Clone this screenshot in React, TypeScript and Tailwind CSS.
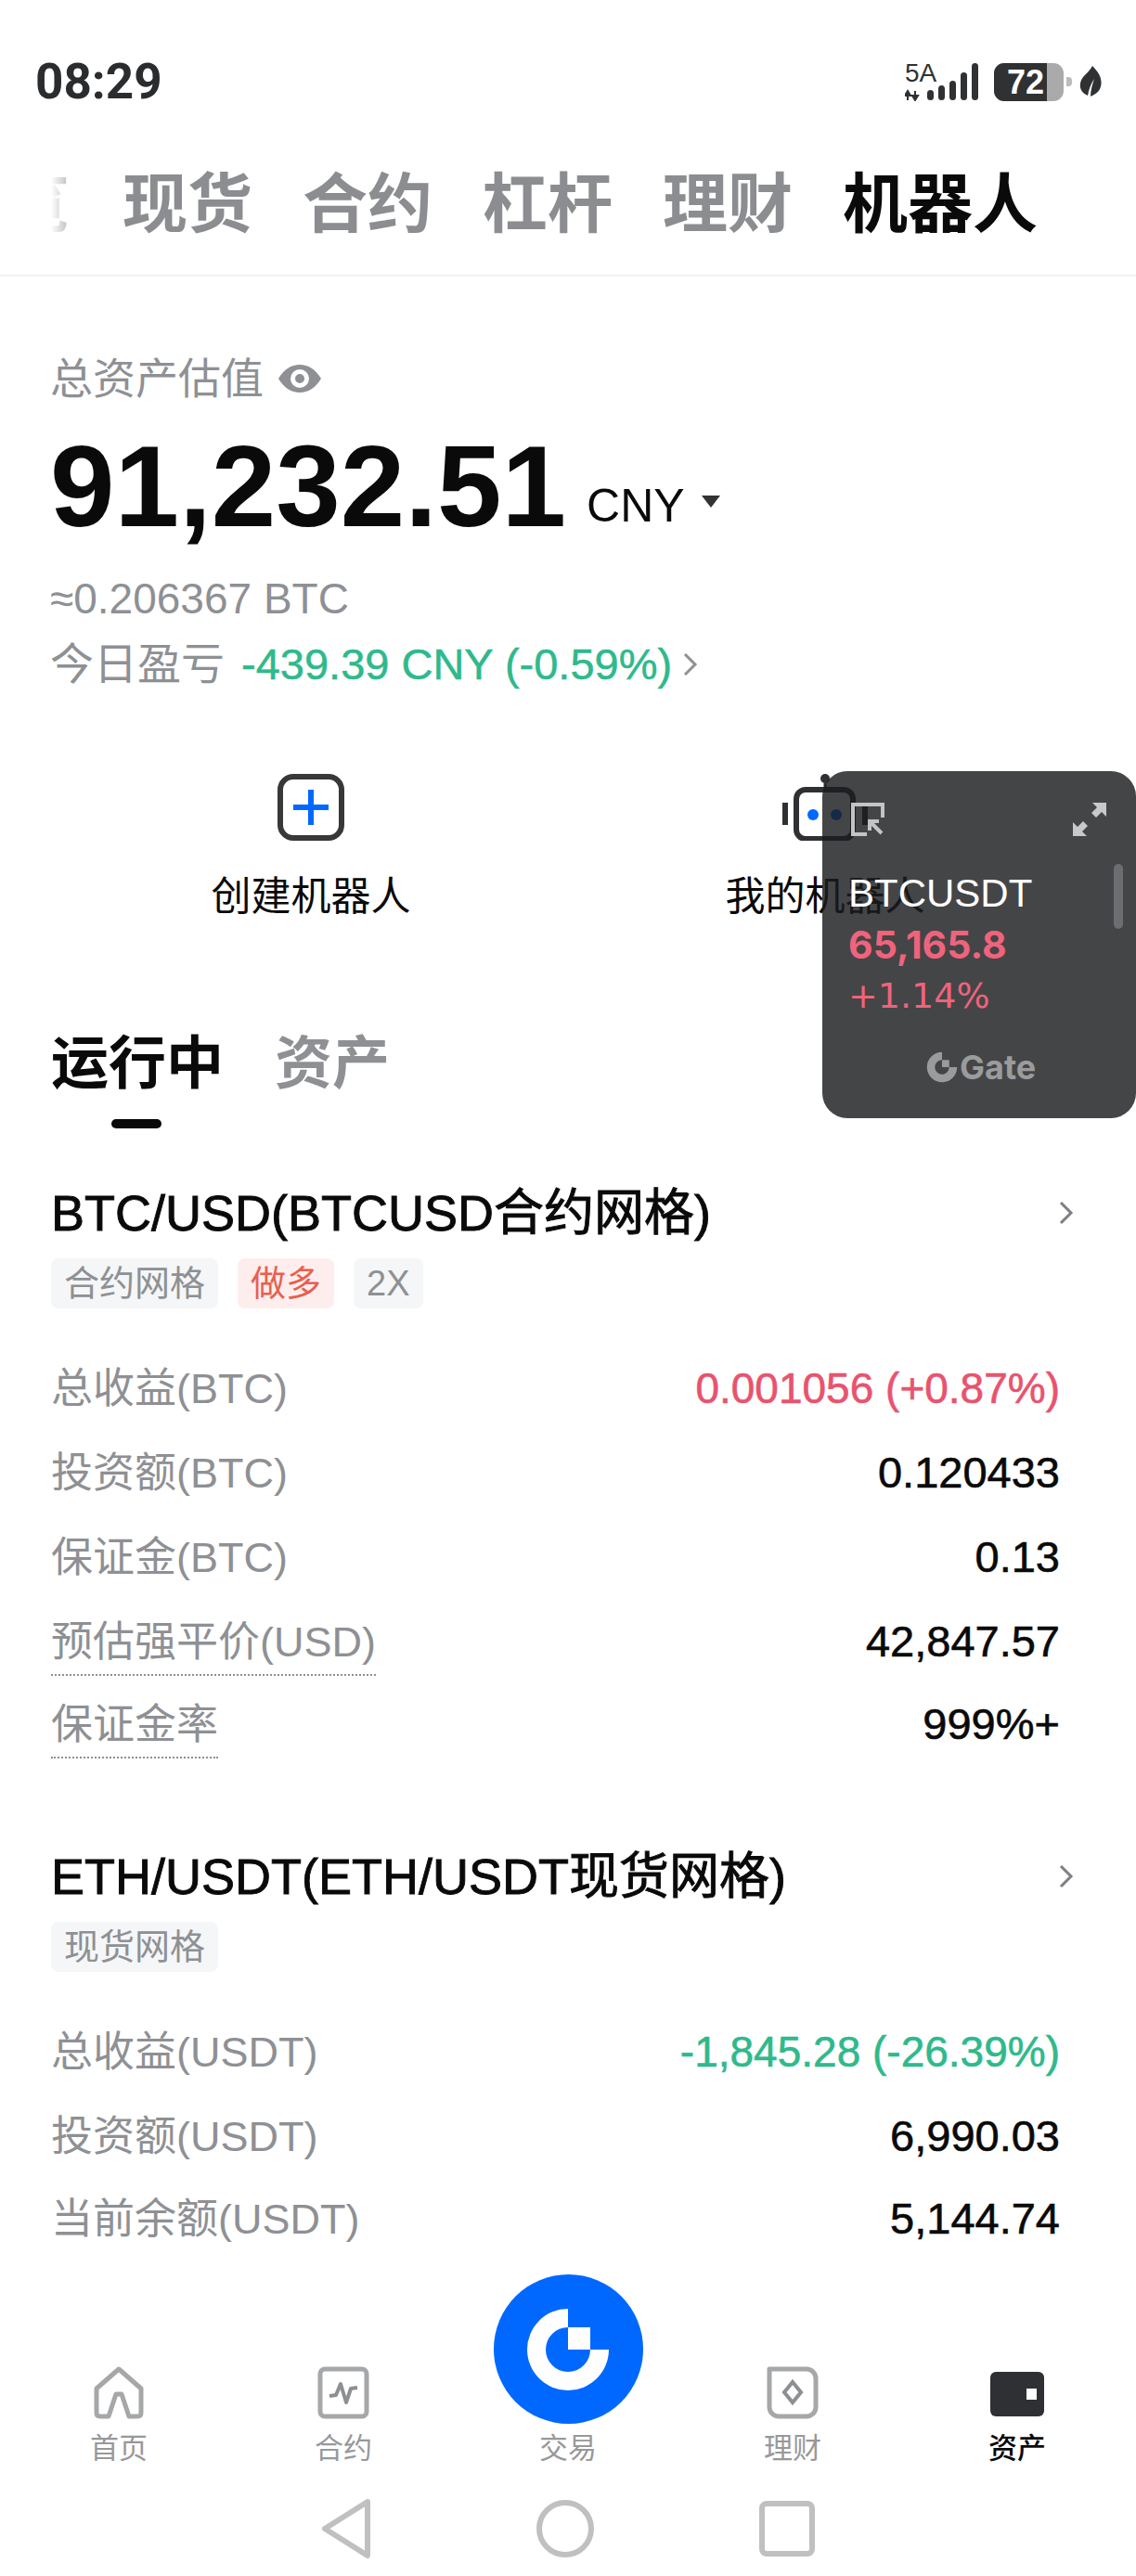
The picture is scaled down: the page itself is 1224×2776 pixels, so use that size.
import type { ReactNode } from 'react'

const medium = '[-webkit-text-stroke-width:0.9px]'

const btcRows = [
  { label: '总收益(BTC)', value: '0.001056 (+0.87%)', color: 'text-[46px] text-[#e8536e]' },
  { label: '投资额(BTC)', value: '0.120433' },
  { label: '保证金(BTC)', value: '0.13' },
  { label: '预估强平价(USD)', value: '42,847.57', dotted: true },
  { label: '保证金率', value: '999%+', dotted: true },
]

const ethRows = [
  { label: '总收益(USDT)', value: '-1,845.28 (-26.39%)', color: 'text-[46px] text-[#2fb98c]' },
  { label: '投资额(USDT)', value: '6,990.03' },
  { label: '当前余额(USDT)', value: '5,144.74' },
]

type Row = { label: string; value: string; color?: string; dotted?: boolean }

function Chevron({ className }: { className: string }) {
  return (
    <svg viewBox="0 0 16 26" className={className} fill="none" stroke="currentColor" strokeWidth="3">
      <path d="M2 2l11 11L2 24" />
    </svg>
  )
}

function Tag({ children, red }: { children: ReactNode; red?: boolean }) {
  return (
    <span
      className={`flex h-[54px] items-center rounded-lg px-[14px] text-[38px] ${
        red ? 'bg-[#fdeeed] text-[#e8604f]' : 'bg-[#f5f6f7] text-[#8e9094]'
      }`}
    >
      {children}
    </span>
  )
}

function BotCard({ title, tags, rows }: { title: string; tags: ReactNode; rows: Row[] }) {
  return (
    <section className="pl-[55px] pr-[82px]">
      <div className="flex h-[70px] items-center justify-between">
        <h2 className={`text-[54px] leading-[70px] font-normal text-[#0a0a0a] ${medium}`}>{title}</h2>
        <Chevron className="mr-[-15px] h-[26px] w-[16px] text-[#7d7f83]" />
      </div>
      <div className="mt-[14px] flex gap-[21px]">{tags}</div>
      <div className="mt-[41px]">
        {rows.map((row) => (
          <div key={row.label} className="flex h-[91px] items-center justify-between last:h-[87px]">
            <span
              className={`text-[45px] leading-[54px] text-[#8e9094] ${
                row.dotted ? 'mt-[9px] border-b-2 border-dotted border-[#8e9094] pb-[7px]' : ''
              }`}
            >
              {row.label}
            </span>
            <span className={`[-webkit-text-stroke-width:0.6px] ${row.color ?? 'text-[47px] text-[#0a0a0a]'}`}>
              {row.value}
            </span>
          </div>
        ))}
      </div>
    </section>
  )
}

function StatusIcons() {
  return (
    <div className="flex items-center">
      <svg viewBox="0 0 84 42" className="h-[42px] w-[84px]" fill="#303133">
        <text x="0" y="21" fontSize="28" fontFamily="Liberation Sans">5A</text>
        <path d="M3 31v10M3 31l-3 5h6zM11 41V31M11 41l-3-5h6z" stroke="#303133" strokeWidth="2" />
        <rect x="24" y="30" width="7" height="11" rx="3.5" />
        <rect x="36" y="25" width="7" height="16" rx="3.5" />
        <rect x="48" y="20" width="7" height="21" rx="3.5" />
        <rect x="60" y="11" width="7" height="30" rx="3.5" />
        <rect x="72" y="1" width="7" height="40" rx="3.5" />
      </svg>
      <div className="relative ml-[12px] flex h-[41px] w-[75px] overflow-hidden rounded-[11px] bg-[#aaaaaa]">
        <div className="h-full w-[57px] bg-[#303133]" />
        <span className="absolute left-[14px] top-0 text-[36px] leading-[41px] font-bold text-white">72</span>
      </div>
      <div className="ml-[3px] h-[10px] w-[6px] rounded-r-sm bg-[#bbbbbb]" />
      <svg viewBox="0 0 24 34" className="ml-[8px] h-[34px] w-[24px]" fill="#303133">
        <path d="M14 0c8 8 12 16 8 25-2 4-6 6-10 8 0-7 2-13 4-19-4 6-6 12-7 18C3 29 0 25 1 19 2 11 10 8 14 0z" />
      </svg>
    </div>
  )
}

function NavIcon({ name }: { name: string }) {
  if (name === 'home') {
    return (
      <svg viewBox="0 0 54 57" className="h-[57px] w-[54px]" fill="none" stroke="#a6a7a9" strokeWidth="5" strokeLinejoin="round">
        <path d="M27 3L3 24v26q0 4 4 4h9l8-24h6l8 24h9q4 0 4-4V24z" />
      </svg>
    )
  }
  if (name === 'chart') {
    return (
      <svg viewBox="0 0 56 57" className="h-[57px] w-[56px]" fill="none" stroke="#a6a7a9">
        <rect x="3" y="3" width="50" height="51" rx="5" strokeWidth="5" />
        <path d="M13 32l7-1 5-12 6 20 5-15 7-1" strokeWidth="4" strokeLinejoin="round" stroke="#8e8f91" />
      </svg>
    )
  }
  if (name === 'earn') {
    return (
      <svg viewBox="0 0 56 57" className="h-[57px] w-[56px]" fill="none" stroke="#a6a7a9">
        <path d="M13 3h30a10 10 0 0 1 10 10v31a10 10 0 0 1-10 10H13a10 10 0 0 1-10-10V3z" strokeWidth="5" strokeLinejoin="round" />
        <path d="M28 17l9 11-9 11-9-11z" strokeWidth="4" stroke="#8e8f91" />
      </svg>
    )
  }
  return (
    <svg viewBox="0 0 58 48" className="mb-[3px] h-[48px] w-[58px]">
      <rect width="58" height="48" rx="6" fill="#2f3033" />
      <rect x="39" y="18" width="11" height="12" fill="#fff" />
    </svg>
  )
}

const navItems = [
  { label: '首页', icon: 'home' },
  { label: '合约', icon: 'chart' },
  { label: '交易', icon: 'logo' },
  { label: '理财', icon: 'earn' },
  { label: '资产', icon: 'wallet', active: true },
]

function FloatingTicker() {
  return (
    <div className="absolute left-[886px] top-[831px] flex h-[374px] w-[338px] flex-col rounded-[27px] bg-[#1b1c1e]/82 pl-[28px] pr-[14px] text-white">
      <div className="mt-[34px] flex h-[36px] items-center justify-between pl-[3px] pr-[18px]">
        <svg viewBox="0 0 36 36" className="h-[36px] w-[36px]" fill="none" stroke="#c4c4c4" strokeWidth="4">
          <path d="M17 34H2V2h32v14" />
          <path d="M33 33L20 20M20 30V20h10" />
        </svg>
        <svg viewBox="0 0 36 36" className="h-[36px] w-[36px]" fill="#c9c9c9">
          <path d="M21 0h15v15l-5-5-6 6-5-5 6-6zM15 36H0V21l5 5 6-6 5 5-6 6z" />
        </svg>
      </div>
      <div className="relative">
        <div className="absolute right-0 top-[30px] h-[70px] w-[10px] rounded-full bg-[#6c6d70]" />
        <div className="mt-[32px] text-[42px] leading-[60px] font-['Liberation_Sans']">BTCUSDT</div>
        <div className="-mt-[5px] text-[41px] leading-[60px] font-bold text-[#f0637c] font-['Inter']">65,165.8</div>
        <div className="-mt-[5px] text-[38px] leading-[60px] text-[#f0637c] font-['DejaVu_Sans']">+1.14%</div>
      </div>
      <div className="mt-[25px] ml-[84px] flex h-[44px] items-center gap-[2px] text-[#9a9b9c]">
        <svg viewBox="-22 -22 44 44" className="h-[34px] w-[34px]" fill="currentColor">
          <path d="M0-21A21 21 0 1 0 21 0H10A10 10 0 1 1 0-10z" />
          <rect x="0" y="-10" width="10" height="10" />
        </svg>
        <span className="text-[36px] leading-[44px] font-bold font-['Inter']">Gate</span>
      </div>
    </div>
  )
}

export default function App() {
  return (
    <div className="relative flex h-[2776px] w-[1224px] flex-col overflow-hidden bg-white font-['Liberation_Sans','Noto_Sans_CJK_SC',sans-serif]">
      {/* 狀態列 */}
      <div className="flex h-[176px] shrink-0 items-center justify-between pl-[38px] pr-[37px]">
        <span className="mt-[2px] text-[53px] font-bold text-[#2b2c2e] font-['Roboto']">08:29</span>
        <StatusIcons />
      </div>

      {/* 頂部分頁 */}
      <div className="flex h-[122px] shrink-0 items-start border-b-2 border-[#f3f3f4] pl-[55px] pt-[3px] text-[70px] leading-[84px] font-bold text-[#8b8d90]">
        <div className="relative mr-[57px] flex h-[84px] w-[20px] justify-end overflow-hidden">
          <span className="shrink-0">览</span>
          <div className="absolute inset-0 bg-gradient-to-r from-white to-white/40" />
        </div>
        <div className="flex gap-[54px]">
          <span>现货</span>
          <span>合约</span>
          <span>杠杆</span>
          <span>理财</span>
          <span className="text-[#0a0a0a]">机器人</span>
        </div>
      </div>

      <main className="flex-1 overflow-hidden">
        {/* 總資產 */}
        <section className="pl-[54px]">
          <div className="mt-[80px] flex h-[60px] items-center gap-[16px] text-[46px] text-[#8e9094]">
            <span>总资产估值</span>
            <svg viewBox="0 0 46 30" className="h-[30px] w-[46px]" fill="#8e9094">
              <path fillRule="evenodd" d="M0 15C6 5 14 0 23 0s17 5 23 15c-6 10-14 15-23 15S6 25 0 15zm23-10a10 10 0 1 0 0 20 10 10 0 0 0 0-20zm0 5a5 5 0 1 1 0 10 5 5 0 0 1 0-10z" />
            </svg>
          </div>
          <div className="mt-[16px] flex h-[140px] items-center">
            <span className="text-[125px] leading-[140px] font-bold text-[#0a0a0a]">91,232.51</span>
            <span className="ml-[22px] mt-[42px] text-[50px] leading-[60px] text-[#0a0a0a]">CNY</span>
            <svg viewBox="0 0 20 13" className="ml-[18px] mt-[32px] h-[13px] w-[20px]" fill="#333">
              <path d="M0 0h20L10 13z" />
            </svg>
          </div>
          <div className="mt-[21px] h-[60px] text-[46px] leading-[60px] text-[#8e9094]">≈0.206367 BTC</div>
          <div className="mt-[11px] flex h-[60px] items-center text-[47px] leading-[60px]">
            <span className="text-[#8e9094]">今日盈亏</span>
            <span className="ml-[18px] text-[#2fb98c] [-webkit-text-stroke-width:0.5px]">-439.39 CNY (-0.59%)</span>
            <Chevron className="ml-[12px] h-[26px] w-[16px] text-[#8e9094]" />
          </div>
        </section>

        {/* 機器人入口 */}
        <section className="mt-[88px] grid grid-cols-2 pl-[58px] pr-[58px]">
          <div className="flex flex-col items-center">
            <svg viewBox="0 0 72 72" className="h-[72px] w-[72px]" fill="none">
              <rect x="3" y="3" width="66" height="66" rx="14" stroke="#37383a" strokeWidth="6" />
              <path d="M36 17v38M17 36h38" stroke="#0068ff" strokeWidth="6" />
            </svg>
            <span className="mt-[30px] text-[43px] leading-[60px] text-[#0a0a0a]">创建机器人</span>
          </div>
          <div className="flex flex-col items-center">
            <svg viewBox="0 0 92 72" className="h-[72px] w-[92px]" fill="none">
              <circle cx="46" cy="5" r="5" fill="#2f3033" />
              <path d="M46 8v8" stroke="#2f3033" strokeWidth="3" />
              <rect x="15" y="17" width="61" height="53" rx="10" stroke="#2f3033" strokeWidth="6" />
              <path d="M3 31v24M89 31v24" stroke="#2f3033" strokeWidth="6" />
              <circle cx="33" cy="44" r="6" fill="#0068ff" />
              <circle cx="58" cy="44" r="6" fill="#0068ff" />
            </svg>
            <span className="mt-[30px] text-[43px] leading-[60px] text-[#0a0a0a]">我的机器人</span>
          </div>
        </section>

        {/* 運行中 / 資產 */}
        <div className="mt-[111px] flex gap-[55px] pl-[55px] text-[62px] leading-[80px] font-bold">
          <span className="text-[#0a0a0a]">运行中</span>
          <span className="text-[#8e9094]">资产</span>
        </div>
        <div className="ml-[120px] mt-[19px] h-[10px] w-[54px] rounded-full bg-[#0a0a0a]" />

        <div className="mt-[56px]">
          <BotCard
            title="BTC/USD(BTCUSD合约网格)"
            rows={btcRows}
            tags={
              <>
                <Tag>合约网格</Tag>
                <Tag red>做多</Tag>
                <Tag>2X</Tag>
              </>
            }
          />
        </div>
        <div className="mt-[85px]">
          <BotCard title="ETH/USDT(ETH/USDT现货网格)" rows={ethRows} tags={<Tag>现货网格</Tag>} />
        </div>
      </main>

      {/* 底部導覽 */}
      <nav className="h-[336px] shrink-0 bg-white pt-[11px]">
        <div className="grid h-[204px] grid-cols-5 px-[7px]">
          {navItems.map((item) => (
            <div key={item.label} className="flex flex-col items-center justify-end">
              {item.icon === 'logo' ? (
                <div className="mb-[-5px] flex h-[161px] w-[161px] items-center justify-center rounded-full bg-[#0068ff]">
                  <svg viewBox="-44 -44 88 88" className="h-[88px] w-[88px]" fill="#fff">
                    <path d="M0-44A44 44 0 1 0 44 0H24A24 24 0 1 1 0-24z" />
                    <rect x="0" y="-24" width="24" height="24" />
                  </svg>
                </div>
              ) : (
                <NavIcon name={item.icon} />
              )}
              <span
                className={`mt-[16px] text-[31px] leading-[32px] ${
                  item.active ? 'font-medium text-[#0a0a0a]' : 'text-[#97989a]'
                }`}
              >
                {item.label}
              </span>
            </div>
          ))}
        </div>
        <div className="mt-[38px] flex items-center justify-center gap-[178px]">
          <svg viewBox="0 0 54 64" className="h-[64px] w-[54px]" fill="none" stroke="#c0c0c0" strokeWidth="6" strokeLinejoin="round">
            <path d="M50 3L4 32l46 29z" />
          </svg>
          <div className="h-[62px] w-[62px] rounded-full border-[6px] border-[#c0c0c0]" />
          <div className="h-[60px] w-[60px] rounded-lg border-[6px] border-[#c0c0c0]" />
        </div>
      </nav>

      <FloatingTicker />
    </div>
  )
}
